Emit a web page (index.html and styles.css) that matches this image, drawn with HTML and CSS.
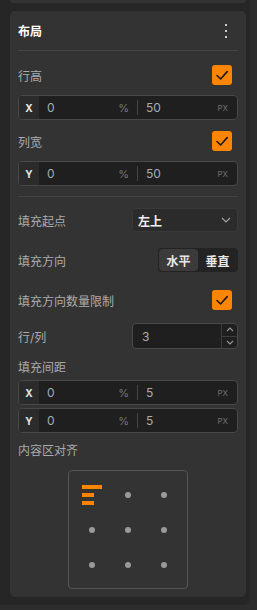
FILE: index.html
```html
<!DOCTYPE html>
<html lang="zh-CN">
<head>
    <meta charset="UTF-8">
    <meta name="viewport" content="width=device-width, initial-scale=1.0">
    <title>布局</title>
    <link rel="stylesheet" href="styles.css">
</head>
<body>

    <div class="panel">
        <div class="prev-card"></div>

        <div class="card">
            <div class="card-header">
                <span class="card-title">布局</span>
                <span class="kebab"><i></i><i></i><i></i></span>
            </div>

            <!-- 行高 -->
            <div class="row row-first">
                <span class="label">行高</span>
                <span class="check"><svg viewBox="0 0 20 20" width="20" height="20"><path d="M5 10.5 L8.6 14 L15.2 6.6" /></svg></span>
            </div>
            <div class="pair">
                <span class="axis">X</span>
                <span class="half"><span class="val">0</span><span class="unit pct">%</span></span>
                <span class="sep"></span>
                <span class="half"><span class="val">50</span><span class="unit">PX</span></span>
            </div>

            <!-- 列宽 -->
            <div class="row row-second">
                <span class="label">列宽</span>
                <span class="check"><svg viewBox="0 0 20 20" width="20" height="20"><path d="M5 10.5 L8.6 14 L15.2 6.6" /></svg></span>
            </div>
            <div class="pair">
                <span class="axis">Y</span>
                <span class="half"><span class="val">0</span><span class="unit pct">%</span></span>
                <span class="sep"></span>
                <span class="half"><span class="val">50</span><span class="unit">PX</span></span>
            </div>

            <div class="divider"></div>

            <!-- 填充起点 -->
            <div class="row row-start">
                <span class="label">填充起点</span>
                <div class="select">
                    <span>左上</span>
                    <svg viewBox="0 0 10 6" width="10" height="6"><path d="M1 1 L5 5 L9 1" /></svg>
                </div>
            </div>

            <!-- 填充方向 -->
            <div class="row row-dir">
                <span class="label">填充方向</span>
                <div class="segment">
                    <span class="seg active">水平</span>
                    <span class="seg">垂直</span>
                </div>
            </div>

            <!-- 数量限制 -->
            <div class="row row-limit">
                <span class="label">填充方向数量限制</span>
                <span class="check"><svg viewBox="0 0 20 20" width="20" height="20"><path d="M5 10.5 L8.6 14 L15.2 6.6" /></svg></span>
            </div>

            <!-- 行/列 -->
            <div class="row row-count">
                <span class="label">行/列</span>
                <div class="number">
                    <span class="num-val">3</span>
                    <div class="stepper">
                        <span><svg viewBox="0 0 8 5" width="8" height="5"><path d="M1 4 L4 1 L7 4" /></svg></span>
                        <span><svg viewBox="0 0 8 5" width="8" height="5"><path d="M1 1 L4 4 L7 1" /></svg></span>
                    </div>
                </div>
            </div>

            <!-- 填充间距 -->
            <div class="label block-label gap-label">填充间距</div>
            <div class="pair pair-tight">
                <span class="axis">X</span>
                <span class="half"><span class="val">0</span><span class="unit pct">%</span></span>
                <span class="sep"></span>
                <span class="half"><span class="val">5</span><span class="unit">PX</span></span>
            </div>
            <div class="pair pair-next">
                <span class="axis">Y</span>
                <span class="half"><span class="val">0</span><span class="unit pct">%</span></span>
                <span class="sep"></span>
                <span class="half"><span class="val">5</span><span class="unit">PX</span></span>
            </div>

            <!-- 内容区对齐 -->
            <div class="label block-label align-label">内容区对齐</div>
            <div class="align-box">
                <span class="cell"><span class="bars"><i class="long"></i><i></i><i></i></span></span>
                <span class="cell"><i class="dot"></i></span>
                <span class="cell"><i class="dot"></i></span>
                <span class="cell"><i class="dot"></i></span>
                <span class="cell"><i class="dot"></i></span>
                <span class="cell"><i class="dot"></i></span>
                <span class="cell"><i class="dot"></i></span>
                <span class="cell"><i class="dot"></i></span>
                <span class="cell"><i class="dot"></i></span>
            </div>
        </div>
    </div>

</body>
</html>
```

FILE: styles.css
```css
/* Reset */
* {
    margin: 0;
    padding: 0;
    box-sizing: border-box;
    font-family: Inter, 'Noto Sans CJK SC', sans-serif;
}

body {
    background: #2d2d2d;
    width: 257px;
    height: 610px;
    overflow: hidden;
}

/* Outer panel */
.panel {
    width: 250px;
    height: 605px;
    background: #262626;
    border-bottom-right-radius: 8px;
    padding-left: 10px;
}

.prev-card {
    width: 236px;
    height: 3px;
    background: #333333;
    border-radius: 0 0 5px 5px;
}

.card {
    width: 236px;
    margin-top: 8px;
    background: #333333;
    border-radius: 5px;
    padding: 0 8px 8px;
}

/* Header */
.card-header {
    height: 40px;
    display: flex;
    align-items: center;
    justify-content: space-between;
    border-bottom: 1px solid #444444;
}

.card-title {
    color: #ffffff;
    font-size: 12px;
    font-weight: 700;
}

.kebab {
    display: flex;
    flex-direction: column;
    gap: 4px;
    margin-right: 11px;
}

.kebab i {
    width: 2px;
    height: 2px;
    background: #cccccc;
}

/* Rows */
.row {
    display: flex;
    align-items: center;
    justify-content: space-between;
}

.label {
    color: #ababab;
    font-size: 12px;
}

.row-first { margin-top: 14px; }
.row-second { margin-top: 11px; }
.row-start { margin-top: 11px; }
.row-dir { margin-top: 16px; }
.row-limit { margin-top: 18px; }
.row-count { margin-top: 13px; }

.check {
    width: 20px;
    height: 20px;
    background: #ff8500;
    border-radius: 3px;
    margin-right: 6px;
    display: flex;
}

.check path {
    fill: none;
    stroke: #1a1a1a;
    stroke-width: 1.6;
    stroke-linecap: round;
    stroke-linejoin: round;
}

/* X / Y value pairs */
.pair {
    display: flex;
    align-items: center;
    height: 25px;
    margin-top: 10px;
    border: 1px solid #484848;
    border-radius: 4px;
    background: #1f1f1f;
    overflow: hidden;
}

.pair-tight { margin-top: 4px; }
.pair-next { margin-top: 3px; }

.axis {
    width: 20px;
    height: 100%;
    background: #2b2b2b;
    color: #e6e6e6;
    font-size: 10px;
    font-weight: 700;
    display: flex;
    align-items: center;
    justify-content: center;
}

.half {
    flex: 1;
    display: flex;
    align-items: center;
    justify-content: space-between;
    padding: 0 8px;
}

.half:last-child {
    padding-right: 9px;
}

.val {
    color: #a7adb3;
    font-size: 12px;
}

.unit {
    color: #6f6f6f;
    font-size: 8px;
}

.unit.pct {
    font-size: 11px;
    color: #777777;
}

.sep {
    width: 1px;
    height: 15px;
    background: #444444;
}

.divider {
    height: 1px;
    background: #444444;
    margin-top: 10px;
}

/* Dropdown */
.select {
    width: 106px;
    height: 24px;
    background: #2b2b2b;
    border: 1px solid #393939;
    border-radius: 4px;
    display: flex;
    align-items: center;
    justify-content: space-between;
    padding: 0 6px 0 5px;
    color: #f0f0f0;
    font-size: 12px;
    font-weight: 700;
}

.select path {
    fill: none;
    stroke: #a0a0a0;
    stroke-width: 1.2;
}

/* Segmented control */
.segment {
    width: 80px;
    height: 24px;
    background: #232323;
    border-radius: 4px;
    display: flex;
    padding: 1px;
}

.seg {
    flex: 1;
    display: flex;
    align-items: center;
    justify-content: center;
    color: #e8e8e8;
    font-size: 12px;
    font-weight: 700;
    border-radius: 4px;
}

.seg.active {
    background: #3b3b3b;
}

/* Number input */
.number {
    width: 106px;
    height: 26px;
    background: #1f1f1f;
    border: 1px solid #484848;
    border-radius: 4px;
    display: flex;
    align-items: center;
    justify-content: space-between;
}

.num-val {
    color: #b0b0b0;
    font-size: 12px;
    padding-left: 9px;
}

.stepper {
    width: 16px;
    height: 100%;
    border-left: 1px solid #3d3d3d;
    display: flex;
    flex-direction: column;
}

.stepper span {
    flex: 1;
    display: flex;
    align-items: center;
    justify-content: center;
}

.stepper span:first-child {
    border-bottom: 1px solid #3d3d3d;
}

.stepper path {
    fill: none;
    stroke: #9a9a9a;
    stroke-width: 1.1;
}

/* Block labels */
.block-label {
    line-height: 16px;
}

.gap-label { margin-top: 11px; }
.align-label { margin-top: 10px; }

/* Alignment box */
.align-box {
    width: 120px;
    height: 119px;
    margin: 11px auto 0;
    border: 1px solid #555555;
    border-radius: 4px;
    display: grid;
    grid-template-columns: repeat(3, 36px);
    grid-template-rows: repeat(3, 35px);
    padding: 7px 6px;
    justify-content: center;
    align-content: center;
}

.cell {
    display: flex;
    align-items: center;
    justify-content: center;
}

.dot {
    width: 6px;
    height: 6px;
    border-radius: 50%;
    background: #9a9a9a;
}

.bars {
    display: flex;
    flex-direction: column;
    gap: 4px;
    width: 20px;
}

.bars i {
    width: 12px;
    height: 4px;
    background: #ff8500;
}

.bars i.long {
    width: 20px;
}
```
